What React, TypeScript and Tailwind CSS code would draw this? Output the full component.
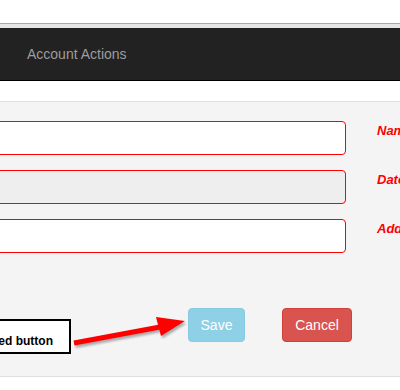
import React from "react";

export default function App() {
  const font = { fontFamily: '"Liberation Sans", Arial, sans-serif' };
  return (
    <div className="relative w-[400px] h-[390px] overflow-hidden bg-white" style={font}>
      {/* top white area */}
      <div className="h-[23px] bg-white" />
      {/* navbar */}
      <div className="border-t border-[#a8a8a8] bg-[#e6e6e6] pt-[4px]">
        <div className="h-[53px] bg-[#222222] border-b border-black flex items-center pl-[27px] pb-[1px]">
          <span className="text-[14px] text-[#9d9d9d] leading-[20px]">Account Actions</span>
        </div>
      </div>
      <div className="h-[20px] bg-white" />
      {/* panel */}
      <div className="border-t border-b border-[#e0e0e0] bg-[#f4f4f4] pt-[19px] pb-[34px]">
        <div className="flex flex-col gap-[15px]">
          <div className="flex items-start">
            <div className="shrink-0 -ml-[12px] w-[358px] h-[34px] rounded-[4px] border border-[#ff0000] bg-white" />
            <span className="shrink-0 ml-[31px] mt-[1px] text-[13px] leading-[18px] font-bold italic text-[#ff0000] whitespace-nowrap">Name</span>
          </div>
          <div className="flex items-start">
            <div className="shrink-0 -ml-[12px] w-[358px] h-[34px] rounded-[4px] border border-[#ff0000] bg-[#eeeeee]" />
            <span className="shrink-0 ml-[31px] mt-[1px] text-[13px] leading-[18px] font-bold italic text-[#ff0000] whitespace-nowrap">Date</span>
          </div>
          <div className="flex items-start">
            <div className="shrink-0 -ml-[12px] w-[358px] h-[34px] rounded-[4px] border border-[#ff0000] bg-white" />
            <span className="shrink-0 ml-[31px] mt-[1px] text-[13px] leading-[18px] font-bold italic text-[#ff0000] whitespace-nowrap">Address</span>
          </div>
        </div>
        <div className="mt-[55px] flex pl-[188px] gap-[37px]">
          <button className="shrink-0 w-[57px] h-[34px] rounded-[4px] bg-[#8ed1e6] border border-[#86cbe1] text-white text-[14px] leading-[20px]">
            Save
          </button>
          <button className="shrink-0 w-[70px] h-[34px] rounded-[4px] bg-[#d9534f] border border-[#d43f3a] text-white text-[14px] leading-[20px]">
            Cancel
          </button>
        </div>
      </div>

      {/* annotation box */}
      <div className="absolute left-[-80px] top-[319px] w-[151px] h-[35px] border-2 border-black bg-white flex justify-end pr-[16px] pt-[13px]">
        <span className="text-[12px] leading-[14px] font-bold text-black whitespace-nowrap">Disabled button</span>
      </div>

      {/* arrow */}
      <svg className="absolute left-0 top-0 pointer-events-none" width="400" height="390" viewBox="0 0 400 390">
        <defs>
          <filter id="sh" x="-20%" y="-50%" width="140%" height="200%">
            <feGaussianBlur stdDeviation="1.2" />
          </filter>
        </defs>
        <g transform="translate(1.5,2.5)" filter="url(#sh)" opacity="0.45">
          <line x1="74" y1="343" x2="160" y2="327" stroke="#555" strokeWidth="5" />
          <polygon points="156,317 185,321 161,336" fill="#555" />
        </g>
        <line x1="74" y1="343" x2="160" y2="327" stroke="#ff0000" strokeWidth="5" />
        <polygon points="156,317 185,321 161,336" fill="#ff0000" />
      </svg>
    </div>
  );
}
